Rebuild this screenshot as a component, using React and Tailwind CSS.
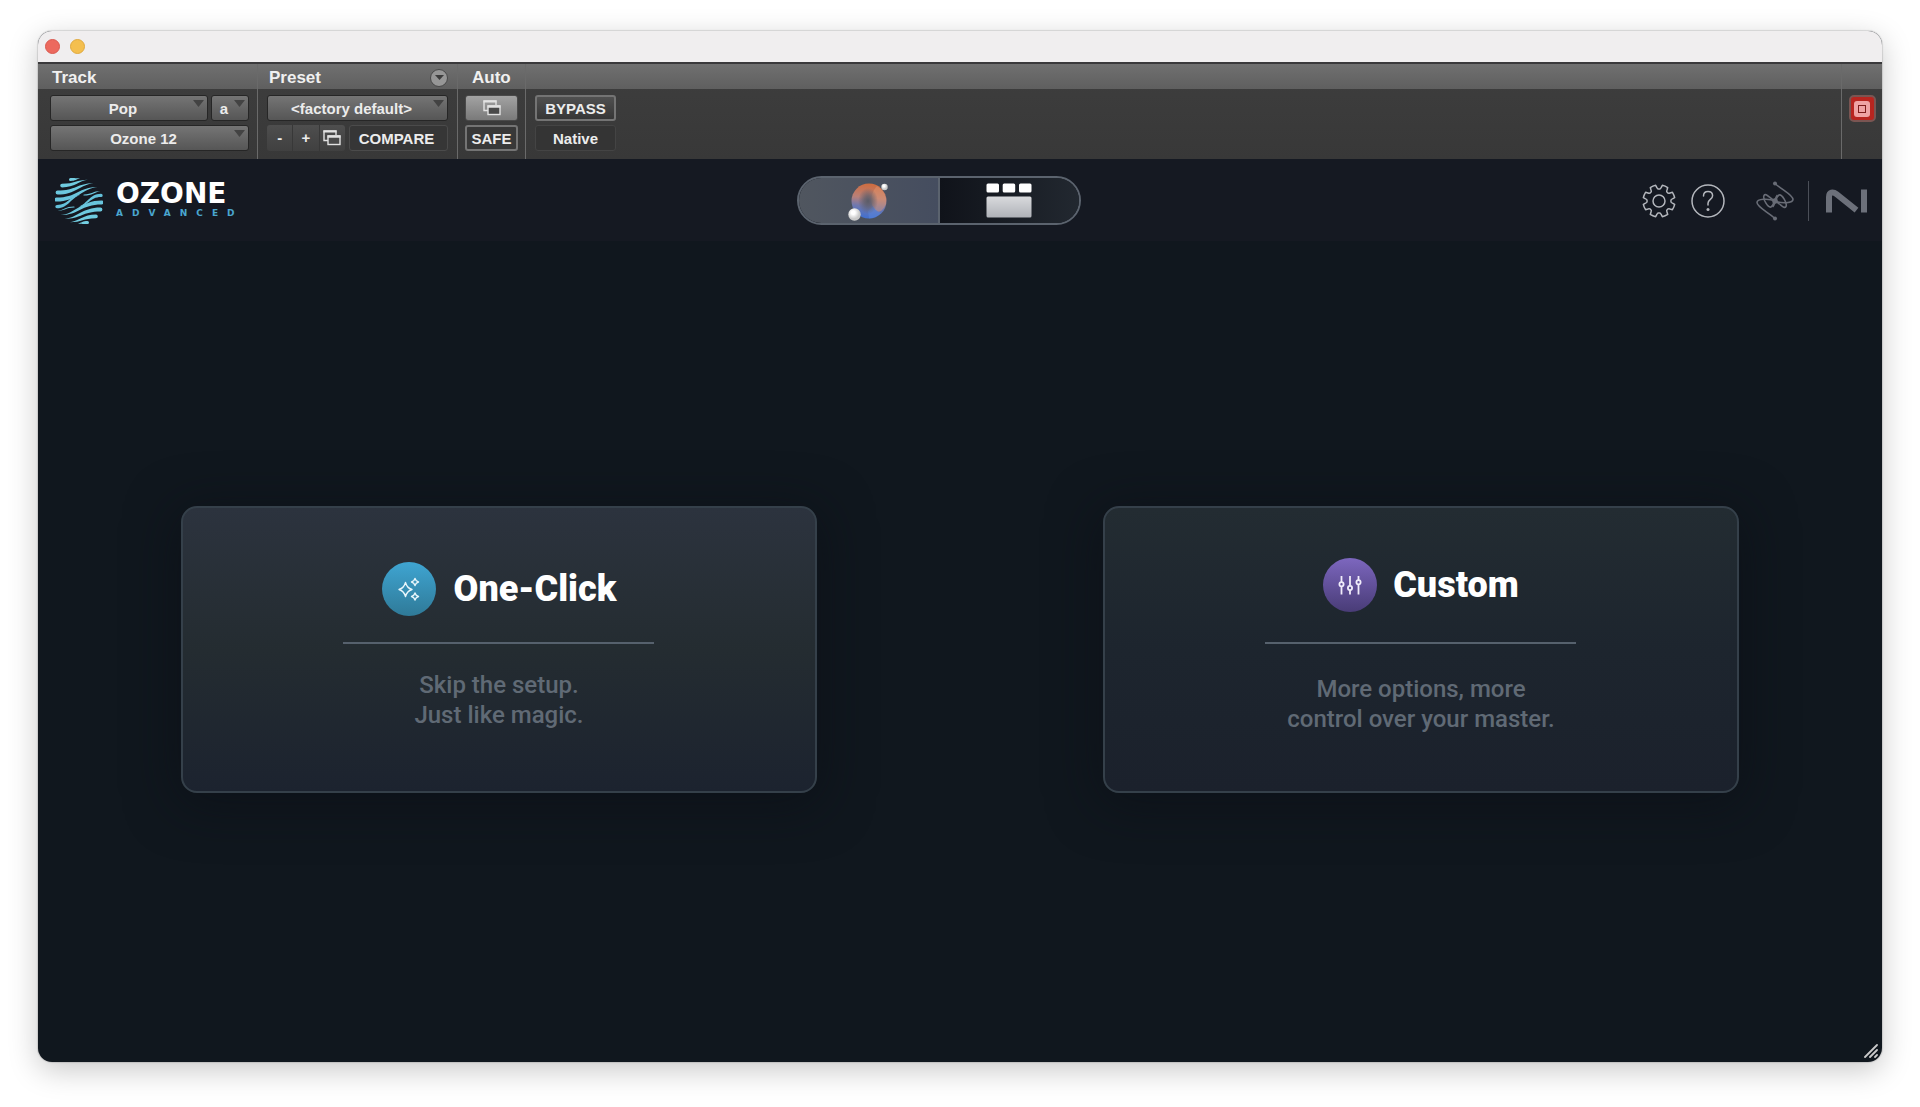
import React, { useState } from 'react';

const gearPoint = (r, deg) => {
    const a = (deg * Math.PI) / 180;
    return `${(20 + r * Math.sin(a)).toFixed(2)} ${(20 - r * Math.cos(a)).toFixed(2)}`;
};

// eight teeth, with a notch pointing straight up
const gearPath = () => {
    let d = `M${gearPoint(16, 12)}`;
    for (let i = 0; i < 8; i++) {
        const a = i * 45;
        d += ` A16 16 0 0 1 ${gearPoint(16, a + 33)}`;
        d += ` L${gearPoint(13.6, a + 36)} Q${gearPoint(12, a + 38)} ${gearPoint(12, a + 41)}`;
        d += ` L${gearPoint(12, a + 49)} Q${gearPoint(12, a + 52)} ${gearPoint(13.6, a + 54)}`;
        d += ` L${gearPoint(16, a + 57)}`;
    }
    return d + 'Z';
};

const GearIcon = () => (
    <svg className="w-10 h-10" viewBox="0 0 40 40" fill="none" stroke="#b4b7bd" strokeWidth="1.5" strokeLinejoin="round">
        <path d={gearPath()} />
        <circle cx="20" cy="20" r="6" />
    </svg>
);

const HelpIcon = () => (
    <svg className="w-10 h-10" viewBox="0 0 40 40" fill="none" stroke="#b4b7bd" strokeWidth="1.5" strokeLinecap="round">
        <circle cx="20" cy="20" r="16" />
        <path d="M15.5 15C15.5 12 17.5 10.6 20 10.6C22.7 10.6 24.6 12.3 24.6 14.8C24.6 18.2 20 18.6 20 22.2V24" />
        <circle cx="20" cy="28.5" r="1.5" fill="#b4b7bd" stroke="none" />
    </svg>
);

const ScribbleIcon = () => (
    <svg className="w-[38px] h-10" viewBox="0 0 38 40" fill="none" stroke="#686c76" strokeWidth="1.6">
        <path d="M19 2.5C26 9 37 14 37 18.5C37 22 26 23 19 20C13 17 10 11.5 8 14.5C6.5 18 12 27 15 26C18 24.5 19 16 21.5 14" />
        <path d="M19 37.5C12 31 1 26 1 21.5C1 18 12 17 19 20C25 23 28 28.5 30 25.5C31.5 22 26 13 23 14C20 15.5 19 24 16.5 26" />
        <circle cx="19" cy="2.5" r="2" fill="#686c76" stroke="none" />
        <circle cx="19" cy="37.5" r="2" fill="#686c76" stroke="none" />
        <circle cx="19" cy="20" r="2.8" fill="#686c76" stroke="none" />
    </svg>
);

const NiIcon = () => (
    <svg className="w-[41px] h-6" viewBox="0 0 41 24" fill="none" stroke="#6c707a" strokeWidth="6">
        <path d="M3 23.5V8C3 3 7 2.5 10.5 5.2L30.5 21.2" />
        <path d="M38 0.5V23.5" />
    </svg>
);

// start x, start y, end x, end y, thickness at the start
const stripes = [
    [15.5, 2.4, 25, 1.2, 3],
    [7, 8.6, 33, 2.8, 3.6],
    [2.6, 15.6, 38.5, 6.2, 4],
    [1.4, 22.6, 42.5, 10, 4],
    [2, 29.6, 25, 18.5, 3.4],
    [29, 18, 45.5, 14, 1.2],
];

const stripePath = ([x0, y0, x1, y1, t]) => {
    const w = x1 - x0;
    return `M${x0} ${y0 - t / 2}C${x0 + w * 0.5} ${y0 - t / 2} ${x0 + w * 0.55} ${y1} ${x1} ${y1}C${x0 + w * 0.65} ${y1 + 1} ${x0 + w * 0.5} ${y0 + t / 2} ${x0} ${y0 + t / 2}A${t / 2} ${t / 2} 0 0 1 ${x0} ${y0 - t / 2}Z`;
};

const OzoneGlobe = () => (
    <svg className="w-12 h-12" viewBox="0 0 48 48">
        <defs>
            <linearGradient id="globe" gradientUnits="userSpaceOnUse" x1="0" y1="0" x2="0" y2="48">
                <stop offset="0" stopColor="#74cfe2" />
                <stop offset="1" stopColor="#5ab8d6" />
            </linearGradient>
        </defs>
        <g fill="url(#globe)">
            {stripes.map((s) => <path key={s[1]} d={stripePath(s)} />)}
        </g>
        <g fill="url(#globe)" transform="rotate(180 24 24)">
            {stripes.map((s) => <path key={s[1]} d={stripePath(s)} />)}
        </g>
    </svg>
);

const OrbIcon = () => (
    <svg className="w-10 h-10" viewBox="0 0 40 40">
        <defs>
            <linearGradient id="orb" x1="0.5" y1="0" x2="0.4" y2="1">
                <stop offset="0" stopColor="#cf6c3e" />
                <stop offset="0.4" stopColor="#b98078" />
                <stop offset="0.65" stopColor="#7078ae" />
                <stop offset="1" stopColor="#3f6fd0" />
            </linearGradient>
            <radialGradient id="core">
                <stop offset="0" stopColor="#5a5c68" />
                <stop offset="0.4" stopColor="#5a5c68" stopOpacity="0.7" />
                <stop offset="1" stopColor="#5a5c68" stopOpacity="0" />
            </radialGradient>
            <radialGradient id="ball" cx="0.4" cy="0.35">
                <stop offset="0.3" stopColor="#ffffff" />
                <stop offset="1" stopColor="#c9c9c9" />
            </radialGradient>
        </defs>
        <circle cx="21" cy="20" r="17.5" fill="url(#orb)" />
        <path d="M29 5A17.5 17.5 0 0 1 38 23C35 30 31 32 29 30C24 27 22 20 24 14C25 10 27 7 29 5Z" fill="#e29a72" opacity="0.45" />
        <path d="M20 30L25 25L29 30L33 32A17.5 17.5 0 0 1 21 37.5Z" fill="#5a8ae0" opacity="0.45" />
        <ellipse cx="20" cy="20" rx="10" ry="13" fill="url(#core)" />
        <circle cx="6.5" cy="33.5" r="6.2" fill="url(#ball)" />
        <circle cx="36.5" cy="6" r="3.2" fill="url(#ball)" />
    </svg>
);

const ModulesIcon = () => (
    <svg className="w-[46px] h-[35px]" viewBox="0 0 46 35">
        <defs>
            <linearGradient id="panel" x1="0" y1="0" x2="0" y2="1">
                <stop offset="0" stopColor="#d9dadd" />
                <stop offset="1" stopColor="#afb2b8" />
            </linearGradient>
        </defs>
        <rect x="0.5" y="0.5" width="12.5" height="9" rx="1.5" fill="#fff" />
        <rect x="16.7" y="0.5" width="12.5" height="9" rx="1.5" fill="#fff" />
        <rect x="33" y="0.5" width="12.5" height="9" rx="1.5" fill="#fff" />
        <rect x="0.5" y="13.5" width="45" height="21" rx="1.5" fill="url(#panel)" />
    </svg>
);

const SparkleIcon = () => (
    <svg className="w-6 h-6" viewBox="0 0 24 24" fill="none" stroke="#e8f6fb" strokeWidth="1.4" strokeLinejoin="round">
        <path d="M8.5 5.5Q10 11 15 12.5Q10 14 8.5 19.5Q7 14 2 12.5Q7 11 8.5 5.5Z" />
        <path d="M18 1.5Q18.8 4.2 21.5 5Q18.8 5.8 18 8.5Q17.2 5.8 14.5 5Q17.2 4.2 18 1.5Z" />
        <path d="M18 16Q18.8 18.7 21.5 19.5Q18.8 20.3 18 23Q17.2 20.3 14.5 19.5Q17.2 18.7 18 16Z" />
    </svg>
);

const SlidersIcon = () => (
    <svg className="w-6 h-6" viewBox="0 0 24 24" fill="none" stroke="#f0ecfa" strokeWidth="1.8">
        <path d="M3.5 3V9M3.5 13.5V21.5M12 3V12.5M12 17V21.5M20.5 3V7.2M20.5 11.5V21.5" />
        <circle cx="3.5" cy="11.3" r="2.1" />
        <circle cx="12" cy="15" r="2.1" />
        <circle cx="20.5" cy="9.3" r="2.1" />
    </svg>
);

const WindowsIcon = () => (
    <svg className="w-[18px] h-4" viewBox="0 0 18 16" fill="none" stroke="#e2e2e2">
        <path d="M5 10.5H1V1H13V5" strokeWidth="1.4" />
        <path d="M0.5 1.5H13.5" strokeWidth="2.2" />
        <rect x="5" y="6" width="12" height="8.5" strokeWidth="1.4" fill="#4a4a4a" />
        <path d="M4.5 6.5H17.5" strokeWidth="2.4" />
    </svg>
);

const HostSelect = ({ label, value, className }) => (
    <div className={`relative ${className}`}>
        <select
            aria-label={label}
            defaultValue={value}
            className="block w-full h-[26px] pt-px pr-3 appearance-none rounded-[3px] border border-[#262626] bg-linear-to-b from-[#757575] to-[#565656] text-[15px] leading-[22px] font-bold text-center text-[#ececec] [text-align-last:center]"
        >
            <option>{value}</option>
        </select>
        <svg className="absolute top-[5px] right-1 w-[11px] h-[7px] pointer-events-none" viewBox="0 0 11 7">
            <path d="M0 0H11L5.5 7Z" fill="#434343" />
        </svg>
    </div>
);

const HostColumn = ({ title, extra, className, children }) => (
    <section className={`flex flex-col border-r border-[#6a6a6a] ${className}`}>
        <div className="flex items-center justify-between h-[25px] pt-0.5 bg-linear-to-b from-[#707070] to-[#5f5f5f]">
            {title && <h2 className="text-[17px] leading-6 font-bold text-[#f0f0f0]">{title}</h2>}
            {extra}
        </div>
        {children}
    </section>
);

const rackRows = 'flex flex-col gap-1 pt-1.5 pb-2';
const rackButton = 'h-[26px] pt-px rounded-[3px] text-[15px] leading-[22px] font-bold text-[#ececec]';

const HostToolbar = () => (
    <div className="flex border-t-2 border-[#3a393b] bg-linear-to-b from-[#3e3e3e] to-[#383838] font-['Liberation_Sans',sans-serif]">
        <HostColumn title="Track" className="w-[220px] [&>div:first-child]:px-[14px]">
            <div className={`${rackRows} pl-3 pr-2`}>
                <div className="flex gap-[3px]">
                    <HostSelect label="Track" value="Pop" className="flex-1" />
                    <HostSelect label="Insert" value="a" className="w-[38px]" />
                </div>
                <HostSelect label="Plug-in" value="Ozone 12" className="w-full" />
            </div>
        </HostColumn>
        <HostColumn
            title="Preset"
            className="w-[200px] [&>div:first-child]:pl-[11px] [&>div:first-child]:pr-[9px]"
            extra={
                <button aria-label="Preset menu" className="w-[18px] h-[18px] rounded-full bg-[#969696] border border-[#484848] flex items-center justify-center">
                    <svg className="w-[9px] h-[5px]" viewBox="0 0 9 5"><path d="M0 0H9L4.5 5Z" fill="#3c3c3c" /></svg>
                </button>
            }
        >
            <div className={`${rackRows} px-[9px]`}>
                <HostSelect label="Preset" value="<factory default>" className="w-full" />
                <div className="flex justify-between">
                    <div className="flex w-[78px] h-[26px] rounded-[3px] bg-linear-to-b from-[#4e4e4e] to-[#404040] text-[15px] leading-6 font-bold text-[#ececec]">
                        <button className="flex-1 border-r border-[#383838]">-</button>
                        <button className="flex-1 border-r border-[#383838]">+</button>
                        <button aria-label="Copy settings" className="flex flex-1 items-center justify-center"><WindowsIcon /></button>
                    </div>
                    <button className={`w-[99px] pr-1 ${rackButton} border border-[#4b4b4b] bg-[#363636]`}>COMPARE</button>
                </div>
            </div>
        </HostColumn>
        <HostColumn title="Auto" className="w-[68px] [&>div:first-child]:px-[14px]">
            <div className={`${rackRows} px-[7px]`}>
                <button aria-label="Automation" className="flex items-center justify-center h-[26px] rounded-[3px] border border-[#4a4a4a] bg-linear-to-b from-[#a3a3a3] to-[#7a7a7a]">
                    <WindowsIcon />
                </button>
                <button className={`${rackButton} border-2 border-[#747474] bg-[#383838]`}>SAFE</button>
            </div>
        </HostColumn>
        <HostColumn className="flex-1">
            <div className={`${rackRows} px-[9px]`}>
                <button className={`w-[81px] ${rackButton} border-2 border-[#747474] bg-linear-to-b from-[#505050] to-[#363636]`}>BYPASS</button>
                <button className={`w-[81px] ${rackButton} border border-[#444] bg-[#343434]`}>Native</button>
            </div>
        </HostColumn>
        <section className="w-10 flex flex-col items-center">
            <div className="w-full h-[25px] bg-linear-to-b from-[#707070] to-[#5f5f5f]" />
            <button aria-label="Target" className="mt-1.5 w-[27px] h-[27px] rounded-[5px] border-2 border-[#7a5552] bg-[#b8251f] flex items-center justify-center">
                <span className="w-4 h-4 rounded-[3px] bg-[#efa3a3] flex items-center justify-center">
                    <span className="w-2 h-2 border border-[#7d1c1a]" />
                </span>
            </button>
        </section>
    </div>
);

const PluginHeader = ({ view, setView }) => (
    <header className="flex items-center justify-between h-[82px] pl-[17px] pr-[15px] pt-px bg-[#151922]">
        <div className="flex items-center gap-[13px]">
            <OzoneGlobe />
            <div className="flex flex-col w-[122px] pb-1 font-['DejaVu_Sans',sans-serif] font-bold">
                <span className="text-[28px] leading-7 text-white">OZONE</span>
                <span className="text-[9px] leading-[10px] tracking-[1em] text-[#4aa6cf]">ADVANCED</span>
            </div>
        </div>
        <div className="flex w-[284px] h-[49px] rounded-full border-2 border-[#5b636e] overflow-hidden">
            <button
                aria-label="Assistant view"
                aria-pressed={view === 'assistant'}
                onClick={() => setView('assistant')}
                className="flex flex-1 items-center justify-center border-r-2 border-[#5b636e] bg-linear-to-r from-[#50565f] to-[#454d5f]"
            >
                <OrbIcon />
            </button>
            <button
                aria-label="Detailed view"
                aria-pressed={view === 'modules'}
                onClick={() => setView('modules')}
                className="flex flex-1 items-center justify-center bg-linear-to-r from-[#10131a] to-[#222830]"
            >
                <ModulesIcon />
            </button>
        </div>
        <div className="flex items-center">
            <button aria-label="Settings"><GearIcon /></button>
            <button aria-label="Help" className="ml-[9px]"><HelpIcon /></button>
            <a href="#izotope" aria-label="iZotope" className="ml-7"><ScribbleIcon /></a>
            <span className="ml-[14px] w-px h-10 bg-[#4b4f58]" />
            <a href="#ni" aria-label="Native Instruments" className="ml-[17px]"><NiIcon /></a>
        </div>
    </header>
);

const ModeCard = ({ icon, title, lines, tone, badge, gap, titleGap }) => (
    <button className={`flex flex-col items-center justify-center w-[69%] min-h-[287px] pb-2 rounded-2xl border-2 border-[#35404a] bg-linear-to-b shadow-[0_8px_50px_4px_rgba(12,15,22,0.6)] ${tone} ${gap}`}>
        <span className={`flex items-center ${titleGap}`}>
            <span className={`flex items-center justify-center w-[54px] h-[54px] rounded-full bg-linear-to-b ${badge}`}>{icon}</span>
            <span className="font-['Roboto',sans-serif] text-4xl leading-[54px] font-black text-white">{title}</span>
        </span>
        <span className="w-[311px] h-0.5 bg-[#56616d]" />
        <span className="font-['Roboto',sans-serif] text-2xl leading-[30px] font-medium text-[#606a75]">
            {lines[0]}<br />{lines[1]}
        </span>
    </button>
);

export default function App() {
    const [view, setView] = useState('assistant');

    return (
        <div className="flex flex-col min-h-screen bg-white px-[38px] pt-[31px] pb-[45px]">
            <div className="relative flex flex-1 flex-col rounded-[14px] overflow-hidden bg-[#10171e] shadow-[0_8px_30px_rgba(0,0,0,0.22),0_0_1px_1px_rgba(0,0,0,0.12)]">
                <div className="flex items-center gap-2.5 h-[31px] px-[7px] bg-[#f0eeef]">
                    <button aria-label="Close" className="w-[15px] h-[15px] rounded-full bg-[#ec695e] border border-[#d9584f]" />
                    <button aria-label="Minimize" className="w-[15px] h-[15px] rounded-full bg-[#f4bf4f] border border-[#dfa93f]" />
                </div>
                <HostToolbar />
                <PluginHeader view={view} setView={setView} />
                <main className="grid flex-1 grid-cols-2 items-center justify-items-center pb-1">
                    <ModeCard
                        title="One-Click"
                        icon={<SparkleIcon />}
                        lines={['Skip the setup.', 'Just like magic.']}
                        tone="from-[#2c333e] via-[#242c31] to-[#1c232f]"
                        badge="from-[#3fa5d2] to-[#2f7a98]"
                        gap="gap-[26px]"
                        titleGap="gap-[18px]"
                    />
                    <ModeCard
                        title="Custom"
                        icon={<SlidersIcon />}
                        lines={['More options, more', 'control over your master.']}
                        tone="from-[#232c32] via-[#1d252e] to-[#1b212c]"
                        badge="from-[#7d67bf] to-[#493c77]"
                        gap="gap-[30px]"
                        titleGap="gap-4"
                    />
                </main>
                <svg className="absolute right-1 bottom-1 w-[14px] h-[14px]" viewBox="0 0 14 14" stroke="#c9c9c9" strokeWidth="1.8" strokeLinecap="round">
                    <path d="M1 13L13 1M6 13L13 6M11 13L13 11" />
                </svg>
            </div>
        </div>
    );
}
